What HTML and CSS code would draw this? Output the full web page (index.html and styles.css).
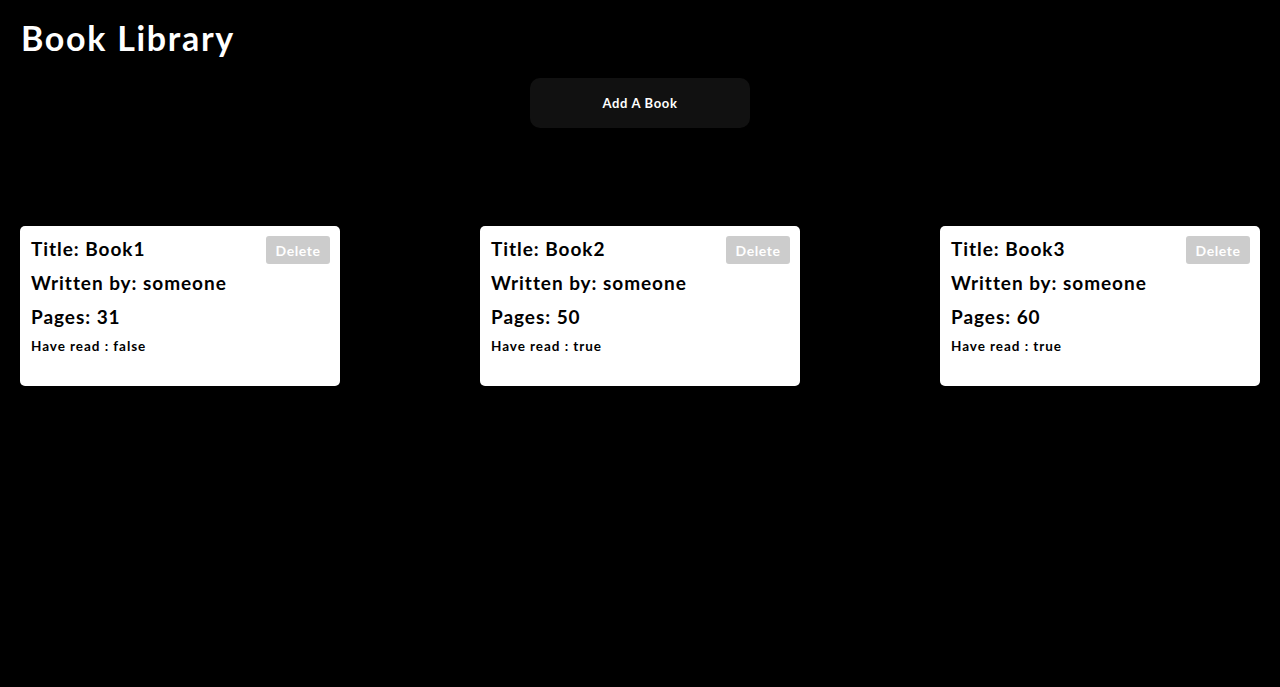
FILE: index.html
```html
<!DOCTYPE html>
<html lang="en">
<head>
<meta charset="utf-8">
<title>Book Library</title>
<link rel="stylesheet" href="styles.css">
</head>
<body>
<header class="header">
  <h1 class="page-title">Book Library</h1>
</header>
<div class="actions">
  <button class="add-btn">Add A Book</button>
</div>
<main class="library">
  <div class="card">
    <div class="card-top">
      <h2 class="card-line">Title: Book1</h2>
      <button class="delete-btn">Delete</button>
    </div>
    <h2 class="card-line">Written by: someone</h2>
    <h2 class="card-line">Pages: 31</h2>
    <p class="card-read">Have read : false</p>
  </div>
  <div class="card">
    <div class="card-top">
      <h2 class="card-line">Title: Book2</h2>
      <button class="delete-btn">Delete</button>
    </div>
    <h2 class="card-line">Written by: someone</h2>
    <h2 class="card-line">Pages: 50</h2>
    <p class="card-read">Have read : true</p>
  </div>
  <div class="card">
    <div class="card-top">
      <h2 class="card-line">Title: Book3</h2>
      <button class="delete-btn">Delete</button>
    </div>
    <h2 class="card-line">Written by: someone</h2>
    <h2 class="card-line">Pages: 60</h2>
    <p class="card-read">Have read : true</p>
  </div>
</main>
</body>
</html>
```
FILE: styles.css
```css
* { box-sizing: border-box; }
html, body { margin: 0; padding: 0; background: #000; }
body {
  font-family: "Lato", "Noto Sans", sans-serif;
  color: #fff;
  padding: 0 20px;
  min-height: 687px;
}
.header { padding-top: 18px; }
.page-title {
  margin: 0;
  font-size: 34px;
  font-weight: 700;
  line-height: 40px;
  padding-left: 1px;
  letter-spacing: 1.7px;
}
.actions {
  display: flex;
  justify-content: center;
  margin-top: 20px;
}
.add-btn {
  width: 220px;
  height: 50px;
  background: #111;
  color: #fff;
  border: none;
  border-radius: 10px;
  font-family: inherit;
  font-weight: 700;
  font-size: 13px;
  letter-spacing: 0.65px;
}
.library {
  display: flex;
  justify-content: space-between;
  margin-top: 98px;
}
.card {
  width: 320px;
  height: 160px;
  background: #fff;
  color: #000;
  border-radius: 5px;
  padding: 10px 10px 10px 11px;
}
.card-top {
  display: flex;
  justify-content: space-between;
  align-items: flex-start;
}
.card-line {
  margin: 0 0 8px;
  font-size: 19px;
  font-weight: 700;
  line-height: 26px;
  letter-spacing: 0.95px;
}
.delete-btn {
  width: 64px;
  height: 28px;
  background: #ccc;
  color: #fff;
  border: none;
  border-radius: 3px;
  font-family: inherit;
  font-weight: 700;
  font-size: 14px;
  letter-spacing: 0.56px;
}
.card-read {
  margin: 0;
  font-size: 13.5px;
  font-weight: 700;
  line-height: 16px;
  letter-spacing: 0.95px;
}
```
